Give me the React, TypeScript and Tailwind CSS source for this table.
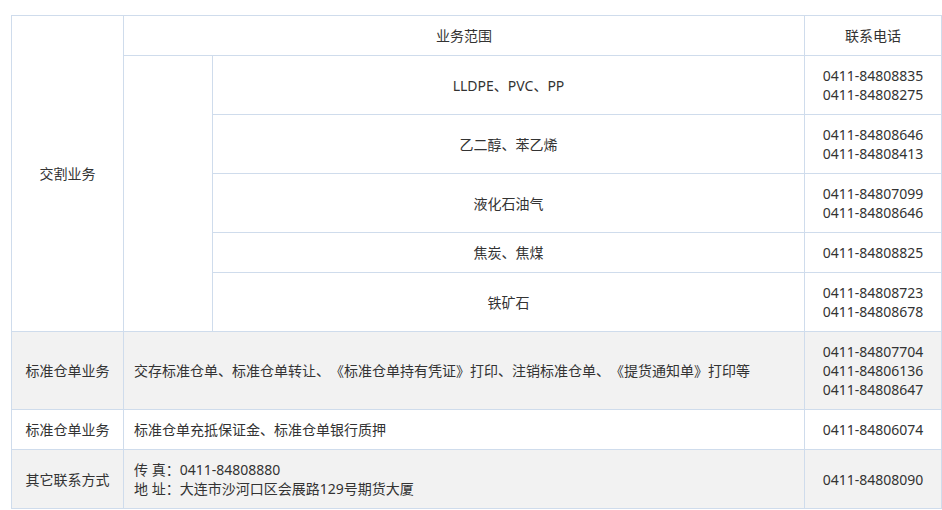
import React from 'react';

const cell = 'border border-[#cfdcec] py-[10px] px-[10px] leading-[19px]';

const products: { name: string; phones: string[] }[] = [
  { name: 'LLDPE、PVC、PP', phones: ['0411-84808835', '0411-84808275'] },
  { name: '乙二醇、苯乙烯', phones: ['0411-84808646', '0411-84808413'] },
  { name: '液化石油气', phones: ['0411-84807099', '0411-84808646'] },
  { name: '焦炭、焦煤', phones: ['0411-84808825'] },
  { name: '铁矿石', phones: ['0411-84808723', '0411-84808678'] },
];

const Phones: React.FC<{ list: string[] }> = ({ list }) => (
  <>
    {list.map((p) => (
      <div key={p}>{p}</div>
    ))}
  </>
);

export default function App() {
  return (
    <div
      className="bg-white pl-[11px] pt-[15px] text-[14px] text-[#333] [text-spacing-trim:space-all]"
      style={{ fontFamily: '"Noto Sans", "Noto Sans CJK SC", sans-serif' }}
    >
      <table className="table-fixed border-collapse w-[931px]">
        <colgroup>
          <col className="w-[112px]" />
          <col className="w-[89px]" />
          <col className="w-[592px]" />
          <col className="w-[137px]" />
        </colgroup>
        <tbody>
          <tr>
            <td rowSpan={6} className={`${cell} text-center`}>
              交割业务
            </td>
            <td colSpan={2} className={`${cell} text-center`}>
              业务范围
            </td>
            <td className={`${cell} text-center`}>联系电话</td>
          </tr>
          {products.map((p, i) => (
            <tr key={p.name}>
              {i === 0 && <td rowSpan={5} className={cell}></td>}
              <td className={`${cell} text-center`}>{p.name}</td>
              <td className={`${cell} text-center`}>
                <Phones list={p.phones} />
              </td>
            </tr>
          ))}
          <tr className="bg-[#f2f2f2]">
            <td className={`${cell} text-center`}>标准仓单业务</td>
            <td colSpan={2} className={cell}>
              交存标准仓单、标准仓单转让、《标准仓单持有凭证》打印、注销标准仓单、《提货通知单》打印等
            </td>
            <td className={`${cell} text-center`}>
              <Phones list={['0411-84807704', '0411-84806136', '0411-84808647']} />
            </td>
          </tr>
          <tr>
            <td className={`${cell} text-center`}>标准仓单业务</td>
            <td colSpan={2} className={cell}>
              标准仓单充抵保证金、标准仓单银行质押
            </td>
            <td className={`${cell} text-center`}>0411-84806074</td>
          </tr>
          <tr className="bg-[#f2f2f2]">
            <td className={`${cell} text-center`}>其它联系方式</td>
            <td colSpan={2} className={cell}>
              <div>传 真：0411-84808880</div>
              <div>地 址：大连市沙河口区会展路129号期货大厦</div>
            </td>
            <td className={`${cell} text-center`}>0411-84808090</td>
          </tr>
        </tbody>
      </table>
    </div>
  );
}
